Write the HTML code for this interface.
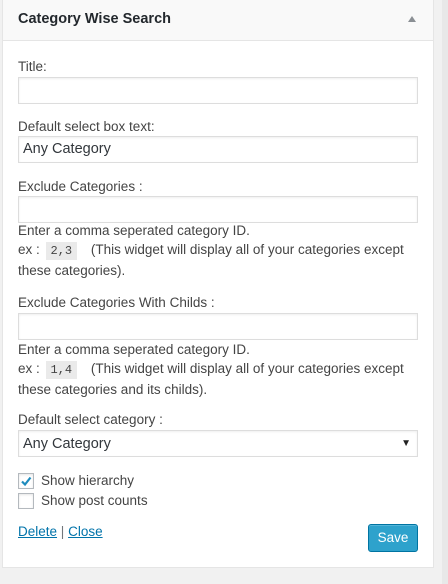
<!DOCTYPE html>
<html><head><style>
*{box-sizing:border-box;margin:0;padding:0}
body{width:448px;height:584px;background:#f1f1f1;font-family:"Liberation Sans",sans-serif;color:#444;font-size:13px;position:relative;overflow:hidden}
.strip{position:absolute;left:442px;top:0;width:6px;height:584px;background:#e8e8e8}
.box{position:absolute;left:2px;top:0;width:432px;height:568px;background:#fff;border:1px solid #e5e5e5;border-top:none}
.hd{position:absolute;left:0;top:0;width:430px;height:41px;background:#f9f9f9;border-bottom:1px solid #e5e5e5}
.hd b{position:absolute;left:15px;top:11px;font-size:14.5px;font-weight:bold;color:#23282d}
.tri{position:absolute;left:405px;top:16px;width:0;height:0;border-left:4px solid transparent;border-right:4px solid transparent;border-bottom:6px solid #8a8f94}
.t{position:absolute;left:15px;font-size:13.5px;line-height:19px;color:#444;white-space:nowrap}
.in{position:absolute;left:15px;width:400px;height:27px;border:1px solid #ddd;box-shadow:inset 0 1px 2px rgba(0,0,0,.07);font-size:14.5px;padding:4px 0 0 4px;color:#32373c}
code{font-family:"Liberation Mono",monospace;background:#eaeaea;font-size:12px;padding:2px 5px;margin:0 10px 0 2px}
.cb{position:absolute;left:15px;width:16px;height:16px;border:1px solid #b4b9be;box-shadow:inset 0 1px 2px rgba(0,0,0,.1)}
a{color:#0073aa}
.save{position:absolute;left:365px;top:524px;width:50px;height:28px;background:#2ea2cc;border:1px solid #0074a2;border-radius:3px;color:#fff;font-size:13.5px;text-align:center;line-height:26px;box-shadow:inset 0 1px 0 rgba(120,200,230,.5)}
</style></head><body>
<div class="strip"></div>
<div class="box">
<div class="hd"><b>Category Wise Search</b><div class="tri"></div></div>
<div class="t" style="top:57px">Title:</div>
<div class="in" style="top:77px"></div>
<div class="t" style="top:117px">Default select box text:</div>
<div class="in" style="top:136px">Any Category</div>
<div class="t" style="top:177px">Exclude Categories :</div>
<div class="in" style="top:196px"></div>
<div class="t" style="top:221px">Enter a comma seperated category ID.<br>ex : <code>2,3</code> (This widget will display all of your categories except<br>these categories).</div>
<div class="t" style="top:293px">Exclude Categories With Childs :</div>
<div class="in" style="top:313px"></div>
<div class="t" style="top:340px">Enter a comma seperated category ID.<br>ex : <code>1,4</code> (This widget will display all of your categories except<br>these categories and its childs).</div>
<div class="t" style="top:410px">Default select category :</div>
<div class="in" style="top:430px;padding-top:5px">Any Category<span style="position:absolute;right:6px;top:7px;font-size:10px;color:#222">▼</span></div>
<div class="cb" style="top:473px"><svg width="16" height="16" style="position:absolute;left:-1px;top:-1px"><path d="M4 8.5 L7 11.5 L12.5 4.5" stroke="#1e8cbe" stroke-width="2.2" fill="none"/></svg></div>
<div class="t" style="top:471px;left:38px">Show hierarchy</div>
<div class="cb" style="top:493px"></div>
<div class="t" style="top:491px;left:38px">Show post counts</div>
<div class="t" style="top:522px"><a href="#">Delete</a> <span style="color:#72777c">|</span> <a href="#">Close</a></div>
<div class="save">Save</div>
</div>
</body></html>
